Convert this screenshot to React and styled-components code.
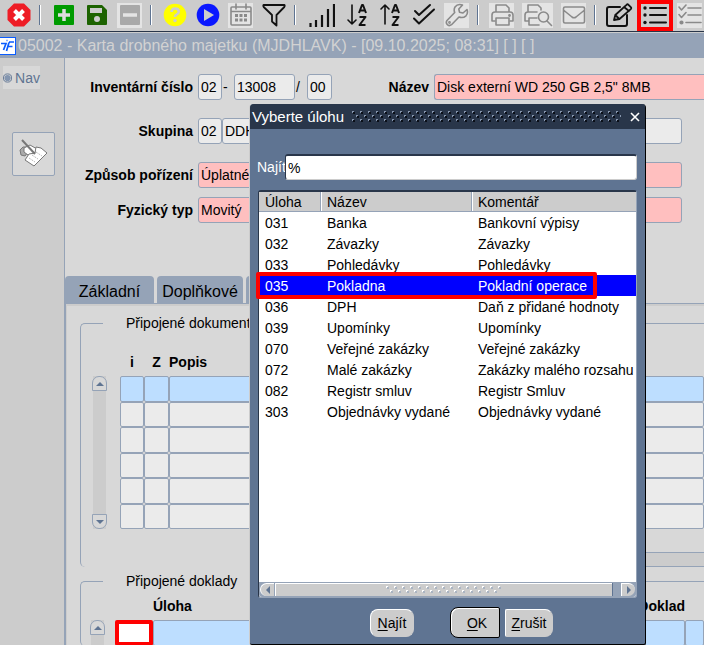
import React from 'react'
import styled, { createGlobalStyle } from 'styled-components'

const steel = '#95a3b7'
const navy = '#29364a'

const GlobalStyle = createGlobalStyle`
    * { box-sizing: border-box; }
    body {
        margin: 0;
        background: #d8d8d8;
        overflow: hidden;
        font-family: "Liberation Sans", Arial, sans-serif;
        font-size: 14px;
        line-height: 18px;
        color: #000;
    }
    button, input { font: inherit; color: inherit; margin: 0; }
    button { padding: 0; }
    table { border-collapse: separate; border-spacing: 0; table-layout: fixed; width: 100%; }
    th, td { padding: 0; }
    svg { display: block; }
`

const Page = styled.div`
    position: relative;
    min-height: 100vh;
    display: flex;
    flex-direction: column;
`

/* toolbar */
const Toolbar = styled.header`
    display: flex;
    align-items: center;
    gap: 8px;
    height: 32px;
    padding: 0 0 1px 6px;
    background: #ccc;
    border-bottom: 1px solid ${navy};
`
const ToolButton = styled.button`
    position: relative;
    flex: none;
    display: flex;
    align-items: center;
    justify-content: center;
    width: ${props => props.$width || 25}px;
    height: 25px;
    border: 0;
    color: ${props => props.$dim ? '#8a8a8a' : '#111'};
    background: ${props => props.$dim ? '#e4e4e4' : 'transparent'};
    ${props => props.$marked && `
        &::after {
            content: "";
            position: absolute;
            inset: -3px -4px;
            border: 4px solid red;
        }
    `}
`
const Separator = styled.span`
    flex: none;
    width: 4px;
    height: 20px;
    border-left: 1px solid #5f7492;
    box-shadow: inset 1px 0 #fff;
`

const TitleBar = styled.div`
    display: flex;
    align-items: center;
    gap: 2px;
    height: 26px;
    border-top: 1px solid #ccc;
    background: ${steel};
    color: #d2d2d2;
    font-size: 16px;
    white-space: nowrap;
`

const Body = styled.div`
    flex: 1;
    display: grid;
    grid-template-columns: 65px minmax(0, 1fr);
`
const Sidebar = styled.nav`
    background: #ccc;
    border-right: 1px solid ${steel};
    padding: 8px 3px;
`
const NavButton = styled.button`
    display: flex;
    align-items: center;
    gap: 3px;
    width: 37px;
    height: 23px;
    border: 0;
    background: #d8d8d8;
    color: #5f7492;
    white-space: nowrap;
`
const NoteButton = styled.button`
    display: flex;
    align-items: center;
    justify-content: center;
    width: 43px;
    height: 44px;
    margin: 43px 0 0 9px;
    border: 1px solid ${steel};
    border-radius: 2px;
    background: #d8d8d8;
`

const Main = styled.main`
    min-width: 0;
    padding-top: 16px;
`

/* record header */
const FormRow = styled.div`
    display: flex;
    align-items: center;
    height: 26px;
    margin-bottom: ${props => props.$gap}px;
    padding-right: ${props => props.$wide ? 0 : 22}px;
`
const Label = styled.label`
    flex: none;
    width: ${props => props.$width || 128}px;
    margin-right: 5px;
    text-align: right;
    font-weight: bold;
    white-space: nowrap;
`
const Field = styled.input`
    width: ${props => props.$width ? props.$width + 'px' : 'auto'};
    flex: ${props => props.$width ? 'none' : '1'};
    min-width: 0;
    height: 26px;
    padding: 0 2px;
    border: 1px solid ${steel};
    border-radius: 3px;
    background: ${props => props.$required ? '#ffbfbf' : '#ebebeb'};
    ${props => props.$open && 'border-right: 0; border-radius: 3px 0 0 3px;'}
`
const Mark = styled.span`
    flex: none;
    width: ${props => props.$width}px;
    padding-left: 1px;
`

/* tabs */
const Tabs = styled.div`
    display: flex;
    gap: 3px;
    height: 27px;
`
const Tab = styled.button`
    flex: none;
    width: ${props => props.$width}px;
    border: 0;
    border-radius: 4px 4px 0 0;
    padding-top: 4px;
    background: ${steel};
    font-size: 16px;
`
const Panel = styled.section`
    border-top: 1px solid ${steel};
    border-left: 1px solid ${steel};
    box-shadow: inset 1px 2px #ccc;
    padding: 10px 0 0 14px;
`
const Group = styled.fieldset`
    min-width: 0;
    margin: 0 0 5px;
    padding: ${props => props.$top}px 0 0 ${props => props.$left}px;
    border: 1px solid ${steel};
    border-width: 1px 0 0 1px;
    border-radius: 5px 0 0 5px;
`
const Legend = styled.legend`
    margin-left: ${props => 22 - props.$left}px;
    padding: 0 23px;
`
const GridArea = styled.div`
    display: flex;
    gap: ${props => props.$gap}px;
`
const Scroller = styled.div`
    flex: none;
    display: flex;
    flex-direction: column;
    justify-content: space-between;
    align-items: center;
    width: 15px;
    margin-top: 23px;
    background: linear-gradient(#ccc, #ccc) center / 13px 100% no-repeat;
`
const ScrollButton = styled.button`
    display: flex;
    align-items: center;
    justify-content: center;
    width: 15px;
    height: 15px;
    border: 1px solid ${steel};
    border-radius: ${props => props.$down ? '0 0 7px 7px' : '7px 7px 0 0'};
    background: #d8d8d8;
`
const RecordTable = styled.table`
    flex: 1;
    width: 0;
    th {
        height: 23px;
        padding-bottom: 5px;
        text-align: left;
    }
    th.mid { text-align: center; }
    th.end { text-align: right; }
    tbody tr { height: 26px; }
    tbody tr:nth-child(even) { height: 25px; }
    tbody td { height: inherit; }
`
const Cell = styled.input`
    display: block;
    width: 100%;
    height: 100%;
    min-height: 25px;
    border: 1px solid ${steel};
    border-radius: 2px;
    background: ${props => props.$active ? '#bddeff' : '#ebebeb'};
    ${props => props.$marked && 'border: 4px solid red; background: #fff;'}
`
const Track = styled.div`
    height: 15px;
    margin: 23px 0 0 200px;
    border: 1px solid ${steel};
    border-width: 1px 0;
    background: #ccc;
`

/* pick list window */
const Dialog = styled.div`
    position: absolute;
    top: 104px;
    left: 250px;
    width: 396px;
    border-right: 1px solid #000;
    border-bottom: 1px solid #000;
    border-radius: 4px 4px 2px 2px;
    box-shadow: -1px 0 #ccc;
    background: #5f7492;
`
const DialogTitle = styled.div`
    display: flex;
    align-items: center;
    gap: 8px;
    height: 25px;
    padding: 0 4px 0 2px;
    border-radius: 4px 3px 0 0;
    background: ${navy};
    color: #fff;
    font-size: 15px;
`
const Grip = styled.svg`
    flex: 1;
    min-width: 0;
    height: 11px;
`
const CloseButton = styled.button`
    border: 0;
    background: none;
    color: #fff;
`
const DialogBody = styled.div`
    padding: 25px 8px 6px;
`
const FindRow = styled.div`
    display: flex;
    align-items: center;
    margin-left: -1px;
    label { color: #fff; flex: none; width: 28px; white-space: nowrap; }
`
const FindInput = styled.input`
    flex: 1;
    min-width: 0;
    height: 26px;
    padding: 0 2px;
    border: 1px solid #ccc;
    border-top: 2px solid ${navy};
    border-left-color: ${navy};
    border-radius: 3px;
    background: #fff;
`
const ListBox = styled.div`
    display: flex;
    flex-direction: column;
    justify-content: space-between;
    height: 408px;
    margin-top: 10px;
    border: 1px solid ${steel};
    border-top: 2px solid ${navy};
    border-left-color: ${navy};
    border-radius: 3px;
    background: #fff;
`
const TaskTable = styled.table`
    th {
        height: 20px;
        padding-left: 6px;
        border-bottom: 1px solid ${steel};
        background: #ccc;
        font-weight: normal;
        text-align: left;
    }
    th + th { border-left: 1px solid ${steel}; box-shadow: inset 1px 0 #fff; }
`
const TaskRow = styled.tr`
    position: relative;
    color: ${props => props.$selected ? '#fff' : '#000'};
    background: ${props => props.$selected ? '#00f' : 'transparent'};
    td {
        height: 21px;
        padding-left: 6px;
        white-space: nowrap;
    }
    td + td { padding-left: 7px; }
    ${props => props.$selected && `
        td:first-child::after {
            content: "";
            position: absolute;
            z-index: 1;
            inset: -3px 39px -3px -3px;
            border: 4px solid red;
            border-radius: 2px;
            pointer-events: none;
        }
    `}
`
const HScroll = styled.div`
    display: flex;
    height: 15px;
    padding: 1px;
    background: ${steel};
    border-radius: 0 0 3px 3px;
`
const HArrow = styled.button`
    display: flex;
    align-items: center;
    justify-content: center;
    width: 14px;
    border: 1px solid #fff;
    border-width: 1px 0 0 1px;
    border-radius: ${props => props.$right ? '0 7px 7px 0' : '7px 0 0 7px'};
    background: #ccc;
`
const Thumb = styled.div`
    flex: 1;
    display: flex;
    align-items: center;
    justify-content: center;
    margin: 0 9px 0 1px;
    border: 1px solid #fff;
    border-width: 1px 0 0 1px;
    box-shadow: 1px 0 #5f7492;
    background: #ccc;
`
const ThumbDots = styled.div`
    display: flex;
    width: 116px;
    height: 8px;
    overflow: hidden;
`
const ButtonRow = styled.div`
    display: flex;
    align-items: center;
    justify-content: flex-end;
    gap: 5px;
    margin-top: 9px;
    padding-right: 84px;
`
const PushButton = styled.button`
    height: ${props => props.$default ? 31 : 28}px;
    width: ${props => props.$width}px;
    margin-right: ${props => props.$apart ? 31 : 0}px;
    padding-left: ${props => props.$default ? 4 : 0}px;
    border: 1px solid ${props => props.$default ? '#000' : '#ccc'};
    border-top-color: ${props => props.$default ? '#000' : '#fff'};
    border-left-color: ${props => props.$default ? '#000' : '#fff'};
    border-radius: ${props => props.$shape || '8px'};
    box-shadow: ${props => props.$default ? 'inset 1px 1px #fff' : 'none'};
    background: #ccc;
    u { text-underline-offset: 2px; }
`

const tasks = [
    ['031', 'Banka', 'Bankovní výpisy'],
    ['032', 'Závazky', 'Závazky'],
    ['033', 'Pohledávky', 'Pohledávky'],
    ['035', 'Pokladna', 'Pokladní operace'],
    ['036', 'DPH', 'Daň z přidané hodnoty'],
    ['039', 'Upomínky', 'Upomínky'],
    ['070', 'Veřejné zakázky', 'Veřejné zakázky'],
    ['072', 'Malé zakázky', 'Zakázky malého rozsahu'],
    ['082', 'Registr smluv', 'Registr Smluv'],
    ['303', 'Objednávky vydané', 'Objednávky vydané'],
]

function Icon({ size = 24, width, children, ...rest }) {
    return (
        <svg width={width || size} height={size} viewBox={`0 0 ${width || size} ${size}`} fill="none"
            stroke="currentColor" strokeWidth="1.6" strokeLinecap="round" strokeLinejoin="round" {...rest}>
            {children}
        </svg>
    )
}

const Printer = () => (
    <>
        <path d="M6 9V2h10l3 3v4M5 18H2v-6q0-3 3-3h15q3 0 3 3v6h-3" />
        <path d="M6 15h13v7H6z" />
        <circle cx="19.5" cy="12.5" r=".6" fill="currentColor" />
    </>
)

const SortIcon = ({ up }) => (
    <Icon>
        <path d={up ? 'M6 21V2M2 6l4-4 4 4' : 'M6 2v19M2 17l4 4 4-4'} />
        <path d="M13 10l3-8h1l3 8M14 7.500h5M13.500 14h6l-6 8h6" strokeWidth="2" strokeLinecap="butt" />
    </Icon>
)

const icons = {
    stop: <Icon stroke="none"><path d="M7 .5h10L23.500 7v10L17 23.500H7L.5 17V7z" fill="#ee1c25" /><path d="M7.500 7.500l9 9M16.500 7.500l-9 9" stroke="#fff" strokeWidth="4" strokeLinecap="butt" /></Icon>,
    add: <Icon stroke="none"><rect x="2" y="2" width="20" height="20" rx="1" fill="#009b00" /><path d="M12 6v12M6 12h12" stroke="#ddd" strokeWidth="3.500" strokeLinecap="butt" /></Icon>,
    save: <Icon stroke="none"><path d="M2 3q0-1 1-1h14l5 5v14q0 1-1 1H3q-1 0-1-1z" fill="#1d6300" /><path d="M5 5h12v5H5z" fill="#ccc" /><circle cx="12" cy="16" r="3" fill="#ccc" /></Icon>,
    remove: <Icon stroke="none"><rect x="2" y="2" width="20" height="20" rx="1" fill="#a9a9a9" /><path d="M5 12h14" stroke="#e4e4e4" strokeWidth="3.500" strokeLinecap="butt" /></Icon>,
    help: <Icon><circle cx="12" cy="12" r="11.300" fill="#ff0" stroke="none" /><path d="M8.500 9q.3-3.500 3.600-3.500 3.700 0 3.700 3 0 1.900-2 2.900-1.800.8-1.800 2.600" stroke="#ccc" strokeWidth="2.600" strokeLinecap="butt" /><circle cx="12" cy="17.500" r="1.700" fill="#ccc" stroke="none" /></Icon>,
    run: <Icon stroke="none"><circle cx="12" cy="12" r="11.300" fill="#0a17ff" /><path d="M8 6l10 6-10 6z" fill="#ccc" /></Icon>,
    calendar: <Icon><path d="M3 4h18q1 0 1 1v16q0 1-1 1H3q-1 0-1-1V5q0-1 1-1zM2 8.500h20M7 1v5M17 1v5" /><path d="M6 12.500h3M10.500 12.500h3M15 12.500h3M6 17h3M10.500 17h3M15 17h3" strokeWidth="3" strokeLinecap="butt" /></Icon>,
    filter: <Icon><path d="M1.500 2h21q.5 1-.2 2L14.500 12v10.500L10 18.500V12L1.700 4q-.7-1-.2-2z" strokeWidth="1.800" /></Icon>,
    bars: <Icon width={26}><path d="M1.500 24v-4M7 24v-7M13 24V12M19 24V6M25 24V1" strokeWidth="2.200" strokeLinecap="butt" /></Icon>,
    down: <SortIcon />,
    up: <SortIcon up />,
    confirm: <Icon><path d="M3 8l4 4 11-10M2 15.500l5 5L22 6.500" strokeWidth="2" /></Icon>,
    wrench: <Icon><path d="M22 6.500l-4 3.500-3.500-.8-.7-3.200L17.500 2Q12.500.5 10 4q-1.500 2.500-.3 5.500L2 17.500q-1.500 2 .2 4t4.300.2L14 14q4 1.500 7-1.200 2.300-2.500 1-6.300z" /><circle cx="4.500" cy="19.500" r=".6" /></Icon>,
    print: <Icon><Printer /></Icon>,
    preview: <Icon width={30}><path d="M5 9V2h10l3 3v2M5 18H2v-6q0-3 3-3h9M14 15H6v7h10" /><circle cx="20.500" cy="14" r="5" fill="#e4e4e4" /><path d="M24 18l4.500 4.500" /></Icon>,
    mail: <Icon><path d="M3 4h18q1.500 0 1.500 1.500v13Q22.500 20 21 20H3q-1.500 0-1.500-1.500v-13Q1.500 4 3 4zM2 7.500l8 6.500q2 1.500 4 0l8-6.500" /></Icon>,
    edit: <Icon width={27}><path d="M14 4H3Q1 4 1 6v15q0 2 2 2h16q2 0 2-2v-9" strokeWidth="2" /><path d="M8 17l1.300-5L20.500 1.800q1-1 2 0l2.300 2.300q1 1 0 2L13.500 16zM18 4l5 4M9.300 12l4 4" strokeWidth="1.800" /></Icon>,
    list: <Icon><path d="M7 5h16M7 12h16M7 19.500h16" strokeWidth="2" /><g fill="currentColor" stroke="none"><circle cx="2" cy="5" r="1.700" /><circle cx="2" cy="12" r="1.700" /><circle cx="2" cy="19.500" r="1.700" /></g></Icon>,
    checks: <Icon><path d="M10 5h13M10 12h13M8 19.500h15M1 4l2.500 3L8 2M1 11.500l2.500 3L8 9.500" /><circle cx="3.500" cy="19.500" r="1.300" fill="currentColor" /></Icon>,
}

const tools = [
    { icon: 'stop', label: 'Konec' },
    null,
    { icon: 'add', label: 'Nový záznam' },
    { icon: 'save', label: 'Uložit' },
    { icon: 'remove', label: 'Smazat', dim: true },
    null,
    { icon: 'help', label: 'Nápověda' },
    { icon: 'run', label: 'Spustit' },
    { icon: 'calendar', label: 'Kalendář', dim: true },
    { icon: 'filter', label: 'Filtr' },
    null,
    { icon: 'bars', label: 'Počet', width: 31 },
    { icon: 'down', label: 'Seřadit vzestupně' },
    { icon: 'up', label: 'Seřadit sestupně' },
    { icon: 'confirm', label: 'Potvrdit' },
    { icon: 'wrench', label: 'Nastavení', dim: true },
    null,
    { icon: 'print', label: 'Tisk', dim: true },
    { icon: 'preview', label: 'Náhled', dim: true, width: 31 },
    { icon: 'mail', label: 'Pošta', dim: true },
    null,
    { icon: 'edit', label: 'Editor', width: 27 },
    { icon: 'list', label: 'Seznam hodnot', width: 28, marked: true },
    { icon: 'checks', label: 'Výběr', dim: true },
]

const Arrow = ({ turn = 0 }) => (
    <svg width="8" height="8" viewBox="0 0 8 8"><path d="M0 6l4-4 4 4z" fill="#5f7492" transform={`rotate(${turn} 4 4)`} /></svg>
)

function Dots({ id, light, dark }) {
    return (
        <Grip shapeRendering="crispEdges">
            <pattern id={id} width="8" height="8" patternUnits="userSpaceOnUse">
                <path d="M1 1h2v2H1zM5 5h2v2H5z" fill={dark} />
                <path d="M0 0h2v1H1v1H0zM4 4h2v1H5v1H4z" fill={light} />
            </pattern>
            <rect width="100%" height="11" fill={`url(#${id})`} />
        </Grip>
    )
}

function TaskDialog() {
    return (
        <Dialog role="dialog" aria-label="Vyberte úlohu">
            <DialogTitle>
                Vyberte úlohu
                <Dots id="title-dots" light="#8796ad" dark="#0a0f18" />
                <CloseButton aria-label="Zavřít">
                    <svg width="12" height="12" viewBox="0 0 12 12"><path d="M2 2l8 8M10 2l-8 8" stroke="#fff" strokeWidth="1.600" /></svg>
                </CloseButton>
            </DialogTitle>
            <DialogBody>
                <FindRow>
                    <label htmlFor="find">Najít</label>
                    <FindInput id="find" defaultValue="%" />
                </FindRow>
                <ListBox>
                    <TaskTable>
                        <colgroup>
                            <col width="61" />
                            <col width="151" />
                            <col />
                        </colgroup>
                        <thead>
                            <tr><th>Úloha</th><th>Název</th><th>Komentář</th></tr>
                        </thead>
                        <tbody>
                            {tasks.map(([code, name, note]) => (
                                <TaskRow key={code} $selected={code === '035'}>
                                    <td>{code}</td>
                                    <td>{name}</td>
                                    <td>{note}</td>
                                </TaskRow>
                            ))}
                        </tbody>
                    </TaskTable>
                    <HScroll>
                        <HArrow aria-label="Vlevo"><Arrow turn={-90} /></HArrow>
                        <Thumb><ThumbDots><Dots id="thumb-dots" light="#fff" dark="#aab4c2" /></ThumbDots></Thumb>
                        <HArrow $right aria-label="Vpravo"><Arrow turn={90} /></HArrow>
                    </HScroll>
                </ListBox>
                <ButtonRow>
                    <PushButton $width={44} $apart><u>N</u>ajít</PushButton>
                    <PushButton $width={50} $default $shape="8px 2px 2px 8px"><u>O</u>K</PushButton>
                    <PushButton $width={48} $shape="2px 8px 8px 2px"><u>Z</u>rušit</PushButton>
                </ButtonRow>
            </DialogBody>
        </Dialog>
    )
}

function App() {
    return (
        <Page>
            <GlobalStyle />
            <Toolbar>
                {tools.map((tool, i) => tool ? (
                    <ToolButton key={i} aria-label={tool.label} $dim={tool.dim} $width={tool.width} $marked={tool.marked}>
                        {icons[tool.icon]}
                    </ToolButton>
                ) : <Separator key={i} />)}
            </Toolbar>
            <TitleBar>
                <svg width="16" height="18" viewBox="0 0 16 18">
                    <path d="M0 0h16v18H0z" fill="#0a5cff" />
                    <path d="M0 1h15v16H0z" fill="#fff" />
                    <path d="M1 6.500h5L3.500 13M6.500 14L9 5.500M9 5h5M8 9.500h4.500M6.500 3.500h1" fill="none" stroke="#0a5cff" strokeWidth="1.700" />
                </svg>
                05002 - Karta drobného majetku (MJDHLAVK) - [09.10.2025; 08:31] [ ] [ ]
            </TitleBar>
            <Body>
                <Sidebar>
                    <NavButton>
                        <svg width="10" height="10" viewBox="0 0 10 10">
                            <circle cx="5" cy="5" r="4.500" fill="#d8d8d8" stroke="#5f7492" />
                            <circle cx="5" cy="5" r="3.400" fill="#8496b0" />
                        </svg>
                        Nav
                    </NavButton>
                    <NoteButton aria-label="Poznámka">
                        <svg width="30" height="30" viewBox="0 0 30 30" stroke="#777" strokeWidth="1" strokeLinejoin="round">
                            <path d="M1 11l3-3h4l1 5-3 4-4-1z" fill="#aaa" />
                            <path d="M5 9l6-3 7 4-3 5-6 1-4-3z" fill="#fff" />
                            <path d="M17 8l5 1 6 5-13 13-9-6 4-6 6-1z" fill="#fff" />
                            <path d="M10 19l6 4M13 16l6 4M17 13l6 4" stroke="#bbb" strokeDasharray="2 1" />
                            <path d="M3 1l13 14" stroke="#777" strokeWidth="2" />
                        </svg>
                    </NoteButton>
                </Sidebar>
                <Main>
                    <FormRow $wide $gap={18}>
                        <Label htmlFor="inv">Inventární číslo</Label>
                        <Field id="inv" $width={24} defaultValue="02" />
                        <Mark $width={12}>-</Mark>
                        <Field $width={61} aria-label="Číslo" defaultValue="13008" />
                        <Mark $width={12}>/</Mark>
                        <Field $width={25} aria-label="Podčíslo" defaultValue="00" />
                        <Label htmlFor="name" $width={97}>Název</Label>
                        <Field id="name" $required $open defaultValue={'Disk externí WD 250 GB 2,5" 8MB'} />
                    </FormRow>
                    <FormRow $gap={18}>
                        <Label htmlFor="group">Skupina</Label>
                        <Field id="group" $width={24} defaultValue="02" />
                        <Field aria-label="Název skupiny" defaultValue="DDHM" />
                    </FormRow>
                    <FormRow $gap={9}>
                        <Label htmlFor="way">Způsob pořízení</Label>
                        <Field id="way" $required defaultValue="Úplatné" />
                    </FormRow>
                    <FormRow $gap={53}>
                        <Label htmlFor="kind">Fyzický typ</Label>
                        <Field id="kind" $required defaultValue="Movitý" />
                    </FormRow>
                    <Tabs>
                        <Tab $width={89}>Základní</Tab>
                        <Tab $width={86}>Doplňkové</Tab>
                        <Tab $width={89} aria-label="Další" />
                    </Tabs>
                    <Panel>
                        <Group $top={21} $left={11}>
                            <Legend $left={11}>Připojené dokumenty</Legend>
                            <GridArea $gap={13}>
                                <Scroller>
                                    <ScrollButton aria-label="Nahoru"><Arrow /></ScrollButton>
                                    <ScrollButton $down aria-label="Dolů"><Arrow turn={180} /></ScrollButton>
                                </Scroller>
                                <RecordTable>
                                    <colgroup><col width="24" /><col width="25" /><col /></colgroup>
                                    <thead>
                                        <tr><th className="mid">i</th><th className="mid">Z</th><th>Popis</th></tr>
                                    </thead>
                                    <tbody>
                                        {[0, 1, 2, 3, 4, 5].map(row => (
                                            <tr key={row}>
                                                <td><Cell aria-label="i" $active={row === 0} /></td>
                                                <td><Cell aria-label="Z" $active={row === 0} /></td>
                                                <td><Cell aria-label="Popis" $active={row === 0} /></td>
                                            </tr>
                                        ))}
                                    </tbody>
                                </RecordTable>
                            </GridArea>
                            <Track />
                        </Group>
                        <Group $top={7} $left={9}>
                            <Legend $left={9}>Připojené doklady</Legend>
                            <GridArea $gap={10}>
                                <Scroller>
                                    <ScrollButton aria-label="Nahoru"><Arrow /></ScrollButton>
                                </Scroller>
                                <RecordTable>
                                    <colgroup><col width="38" /><col width="160" /><col /><col width="19" /></colgroup>
                                    <thead>
                                        <tr><th /><th>Úloha</th><th className="end">Doklad</th><th /></tr>
                                    </thead>
                                    <tbody>
                                        <tr>
                                            <td><Cell aria-label="Kód úlohy" $marked /></td>
                                            <td><Cell aria-label="Úloha" $active /></td>
                                            <td><Cell aria-label="Doklad" $active /></td>
                                            <td><Cell aria-label="Stav" $active /></td>
                                        </tr>
                                    </tbody>
                                </RecordTable>
                            </GridArea>
                        </Group>
                    </Panel>
                </Main>
            </Body>
            <TaskDialog />
        </Page>
    )
}

export default App
